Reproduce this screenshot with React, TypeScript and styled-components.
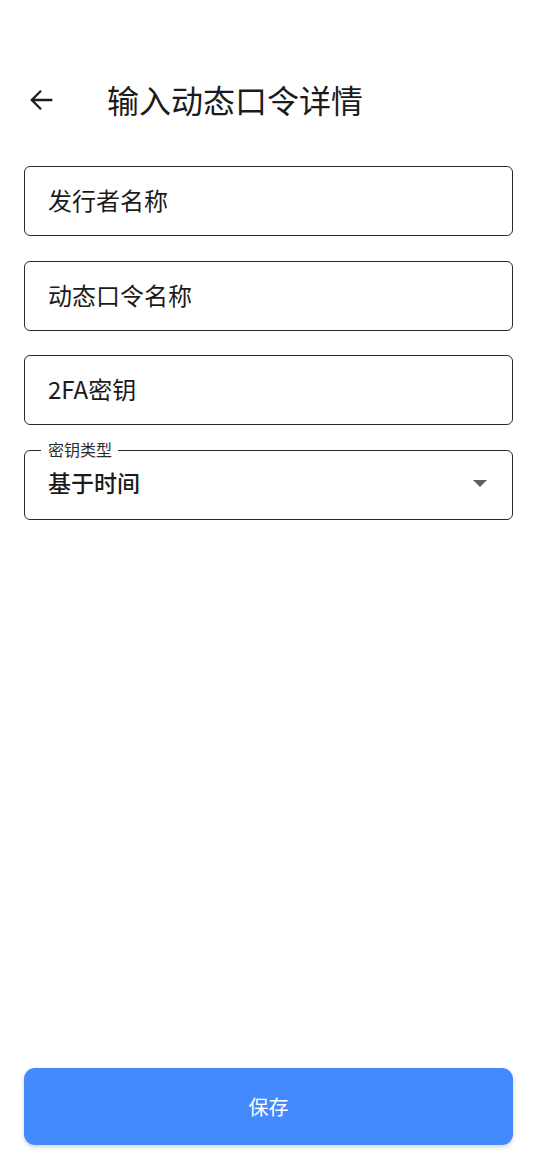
import React from "react";
import styled, { createGlobalStyle } from "styled-components";

const GlobalStyle = createGlobalStyle`
  html, body {
    margin: 0;
    padding: 0;
    background: #fff;
  }
  body {
    font-family: "Noto Sans CJK SC", "Noto Sans", Roboto, sans-serif;
    color: #1b1b1b;
  }
  * {
    box-sizing: border-box;
  }
`;

const fields = ["发行者名称", "动态口令名称", "2FA密钥"];

const App: React.FC = () => {
  return (
    <>
      <GlobalStyle />
      <Page>
        <Header>
          <BackButton aria-label="返回">
            <svg width="34" height="34" viewBox="0 0 24 24" fill="none">
              <path
                d="M20 12H5M12 5.5L5.5 12l6.5 6.5"
                stroke="#1b1b1b"
                strokeWidth="1.6"
              />
            </svg>
          </BackButton>
          <Title>输入动态口令详情</Title>
        </Header>

        <Form>
          {fields.map((f) => (
            <Field key={f}>
              <FieldText>{f}</FieldText>
            </Field>
          ))}
          <Field>
            <FloatLabel>密钥类型</FloatLabel>
            <SelectValue>基于时间</SelectValue>
            <Caret />
          </Field>
        </Form>

        <SaveButton>保存</SaveButton>
      </Page>
    </>
  );
};

const Page = styled.div`
  min-height: 1169px;
  display: flex;
  flex-direction: column;
  padding: 72px 24px 24px;
`;

const Header = styled.div`
  display: flex;
  align-items: center;
  height: 56px;
  gap: 49px;
`;

const BackButton = styled.button`
  background: none;
  border: none;
  padding: 0;
  width: 34px;
  height: 34px;
  display: flex;
  align-items: center;
  justify-content: center;
  cursor: pointer;
`;

const Title = styled.h1`
  margin: 0 0 2px;
  font-size: 32px;
  font-weight: 400;
  letter-spacing: 0;
  color: #1b1b1b;
`;

const Form = styled.div`
  margin-top: 38px;
  display: flex;
  flex-direction: column;
  gap: 24.5px;
`;

const Field = styled.div`
  position: relative;
  height: 70px;
  border: 1.5px solid #2a2a2a;
  border-radius: 6px;
  display: flex;
  align-items: center;
  padding: 0 22px 3px 23px;
`;

const FieldText = styled.span`
  font-size: 24px;
  color: #1b1b1b;
`;

const FloatLabel = styled.span`
  position: absolute;
  top: -12px;
  left: 16px;
  padding: 0 6px 0 7px;
  background: #fff;
  font-size: 16px;
  line-height: 20px;
  color: #2a2a2a;
`;

const SelectValue = styled.span`
  flex: 1;
  font-size: 23px;
  font-weight: 500;
  color: #1b1b1b;
  margin-bottom: 2px;
`;

const Caret = styled.span`
  width: 0;
  height: 0;
  margin-right: 3px;
  border-left: 7.5px solid transparent;
  border-right: 7.5px solid transparent;
  border-top: 7px solid #5f5f5f;
`;

const SaveButton = styled.button`
  margin-top: auto;
  height: 77px;
  width: 100%;
  border: none;
  border-radius: 11px;
  background: #448aff;
  color: #fff;
  font-family: "Noto Sans CJK SC", sans-serif;
  font-size: 20px;
  box-shadow: 0 2px 4px rgba(0, 0, 0, 0.18);
  cursor: pointer;
`;

export default App;
